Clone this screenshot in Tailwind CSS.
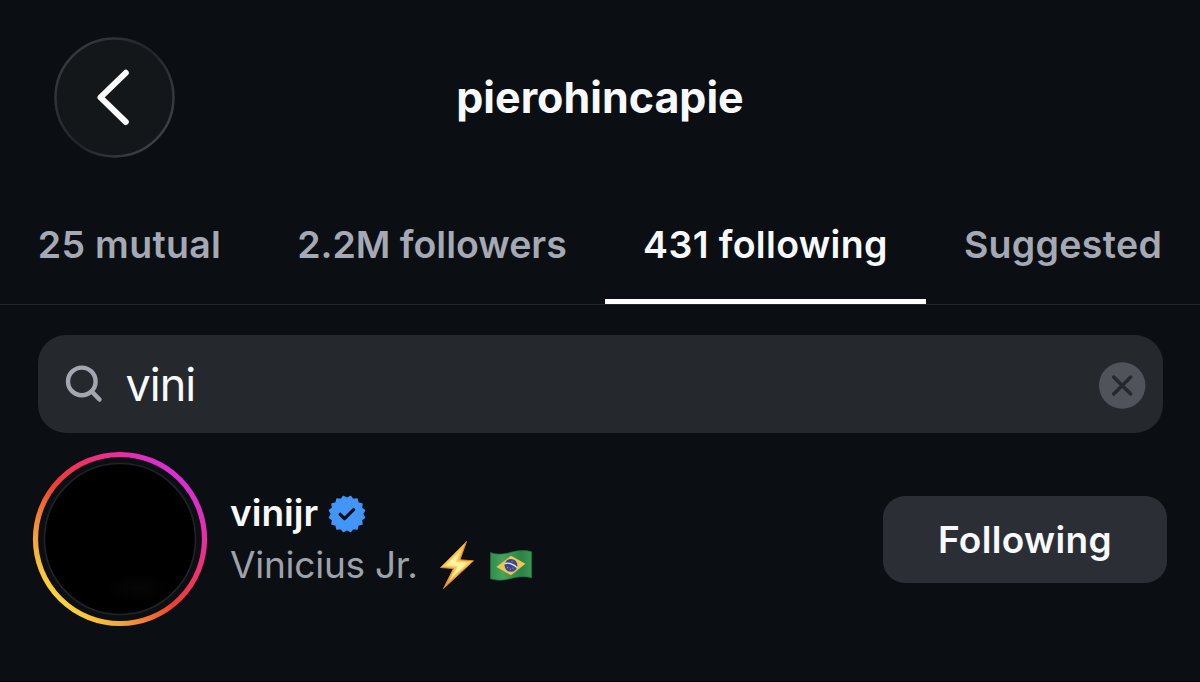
<!DOCTYPE html>
<html lang="en">
<head>
    <meta charset="UTF-8">
    <meta name="viewport" content="width=device-width, initial-scale=1.0">
    <title>pierohincapie - Following</title>
    <script src="https://cdn.jsdelivr.net/npm/@tailwindcss/browser@4"></script>
</head>

<body class="bg-[#0b0f14] font-['Inter',sans-serif] overflow-hidden">
  <div class="w-[1200px] h-[682px] flex flex-col border-b border-black">
    <!-- Header -->
    <header class="h-[195px] shrink-0 grid grid-cols-[1fr_auto_1fr] items-center">
      <button class="ml-[54px] w-[121px] h-[121px]" aria-label="Back">
        <svg class="w-full h-full" viewBox="0 0 121 121" fill="none">
          <defs>
            <linearGradient id="glass" x1="0" y1="0.1" x2="1" y2="0.9">
              <stop offset="0" stop-color="#3b3e41" />
              <stop offset="0.5" stop-color="#212529" />
              <stop offset="1" stop-color="#44474a" />
            </linearGradient>
          </defs>
          <circle cx="60.5" cy="60.5" r="59" fill="#13171a" stroke="url(#glass)" stroke-width="2.4" />
          <path d="M71.8 35.8L46.5 60.4L71.8 85" stroke="#f8fafc" stroke-width="6" stroke-linecap="round" stroke-linejoin="round" />
        </svg>
      </button>
      <h1 class="mb-[2px] text-[43px] leading-[50px] font-bold text-[#f8f9fc]">pierohincapie</h1>
    </header>

    <!-- Tabs -->
    <nav class="h-[110px] shrink-0 flex border-b border-[#23272c] text-[37.5px] leading-[100px] font-semibold text-[#a5a9b3] text-center whitespace-nowrap">
      <a class="w-[259px] tracking-[0.3px]">25 mutual</a>
      <a class="w-[346px]">2.2M followers</a>
      <a class="w-[321px] border-b-5 border-white text-[#f8f9fc] tracking-[0.35px]">431 following</a>
      <a class="w-[274px] tracking-[0.3px]">Suggested</a>
    </nav>

    <!-- Search -->
    <div class="mt-[30px] mx-[37.5px] h-[98px] shrink-0 rounded-[28px] bg-[#25282d] flex items-center pl-[26px] pr-[17px]">
      <svg class="w-[42px] h-[42px]" viewBox="0 0 42 42" fill="none" stroke="#a3a7b0" stroke-width="4.4" stroke-linecap="round">
        <circle cx="17.8" cy="18.4" r="13.8" />
        <path d="M28 28.7L35.5 36.6" />
      </svg>
      <span class="ml-5 mt-px text-[45px] leading-[60px] tracking-[-1px] text-[#f8f9fc]">vini</span>
      <svg class="ml-auto mt-[2px] w-[47px] h-[47px]" viewBox="0 0 47 47" fill="none">
        <circle cx="23.2" cy="23.5" r="23.2" fill="#50545a" />
        <path d="M14.7 15L31.7 32M31.7 15L14.7 32" stroke="#25282d" stroke-width="3.5" stroke-linecap="round" />
      </svg>
    </div>

    <!-- Result row -->
    <div class="mt-[18px] pl-[32px] pr-[33px] h-[176px] shrink-0 flex items-center">
      <svg class="w-[176px] h-[176px]" viewBox="0 0 176 176" fill="none">
        <defs>
          <linearGradient id="story" x1="0" y1="1" x2="1" y2="0">
            <stop offset="0.14" stop-color="#fad43c" />
            <stop offset="0.27" stop-color="#f49b38" />
            <stop offset="0.46" stop-color="#ee4030" />
            <stop offset="0.6" stop-color="#ee3460" />
            <stop offset="0.75" stop-color="#e62fa0" />
            <stop offset="0.86" stop-color="#d82fd4" />
          </linearGradient>
          <radialGradient id="haze">
            <stop offset="0" stop-color="#060607" />
            <stop offset="1" stop-color="#000000" />
          </radialGradient>
        </defs>
        <circle cx="88" cy="88" r="84.5" stroke="url(#story)" stroke-width="5.2" />
        <circle cx="88" cy="88" r="75.5" fill="#000000" stroke="#1f2527" stroke-width="1.6" />
        <ellipse cx="106" cy="137" rx="34" ry="14" fill="url(#haze)" />
      </svg>
      <div class="ml-[22px] flex flex-col">
        <div class="h-[52px] flex items-center">
          <span class="text-[37px] leading-[52px] font-semibold text-[#f8f9fc]">vinijr</span>
          <svg class="ml-[9.5px] mt-px w-[38px] h-[38px]" viewBox="-19 -19 38 38" fill="none">
            <path fill="#4395f7" stroke="#4395f7" stroke-width="1.5" stroke-linejoin="round" d="M0-15.6L3.6-17.5L6-14.4L10-15L11-11L15-10L14.4-6L17.5-3.6L15.6 0L17.5 3.6L14.4 6L15 10L11 11L10 15L6 14.4L3.6 17.5L0 15.6L-3.6 17.5L-6 14.4L-10 15L-11 11L-15 10L-14.4 6L-17.5 3.6L-15.6 0L-17.5-3.6L-14.4-6L-15-10L-11-11L-10-15L-6-14.4L-3.6-17.5Z" />
            <path d="M-6.8 0.3L-2.5 4.7L6.6-4.4" stroke="#0b0f14" stroke-width="3.2" stroke-linecap="round" stroke-linejoin="round" />
          </svg>
        </div>
        <div class="h-[52px] flex items-center">
          <span class="text-[37px] leading-[52px] tracking-[-0.25px] text-[#9ea2ab]">Vinicius Jr.</span>
          <svg class="ml-[21px] w-[36px] h-[50px]" viewBox="0 0 36 50" fill="none">
            <defs>
              <linearGradient id="bolt" x1="0" y1="0" x2="0" y2="1">
                <stop offset="0" stop-color="#fbb634" />
                <stop offset="0.5" stop-color="#fbc64a" />
                <stop offset="1" stop-color="#f09a2c" />
              </linearGradient>
            </defs>
            <path d="M27.5 1.5L1.5 27.5L14.5 28.5L4.5 48.5L34.5 20.8L21 19.8Z" fill="url(#bolt)" stroke="#d98a2b" stroke-width="1" stroke-linejoin="round" />
            <path d="M22.5 9L6 25.8L18 26.6L11.5 39L30 22.3L17.5 21.6Z" fill="#fff1a6" stroke="#fbd55e" stroke-width="1" stroke-linejoin="round" />
          </svg>
          <svg class="ml-[14px] w-[44px] h-[33px]" viewBox="0 0 44 33" fill="none">
            <defs>
              <linearGradient id="flag" x1="0" y1="0" x2="1" y2="0">
                <stop offset="0" stop-color="#328d4c" />
                <stop offset="0.3" stop-color="#47a25c" />
                <stop offset="0.75" stop-color="#2b8446" />
                <stop offset="1" stop-color="#3c9654" />
              </linearGradient>
            </defs>
            <path d="M1.5 3.6C8 5.8 14 5.4 21 3.6C28 1.4 36 0.8 42.6 2.8V28.8C36 26.8 29 27.6 22 29.4C15 31.6 8 31.8 1.5 29.8Z" fill="url(#flag)" stroke="#23703c" stroke-width="0.7" />
            <path d="M7.5 18L22 6.8L36.5 14.8L22 26.2Z" fill="#f0c552" />
            <circle cx="22" cy="16.4" r="6.4" fill="#3c4690" />
            <path d="M15.8 14.6C19.6 13.3 24.8 15 28 18.6" stroke="#e8ecf3" stroke-width="1.3" />
            <path d="M18.2 18.6h1M20.8 20.2h1M23.4 19.2h1M22.6 12.6h1" stroke="#a9b4dc" stroke-width="0.9" />
          </svg>
        </div>
      </div>
      <button class="ml-auto w-[284px] h-[87px] rounded-[22px] bg-[#2b2f35] text-[37px] leading-[87px] font-semibold tracking-[0.35px] text-[#f8f9fc]">Following</button>
    </div>
  </div>
</body>
</html>
